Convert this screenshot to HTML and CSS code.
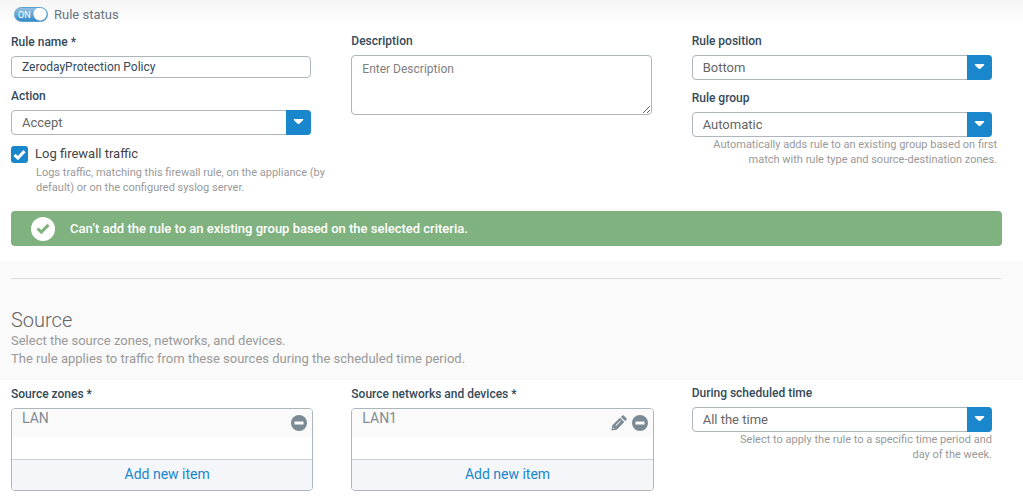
FILE: index.html
```html
<!DOCTYPE html>
<html lang="en">
<head>
<meta charset="utf-8">
<title>Firewall rule</title>
<link rel="stylesheet" href="styles.css">
</head>
<body>
<form class="rule-form">
  <section class="general">
    <label class="status">
      <span class="toggle">
        <input class="toggle-input" type="checkbox" checked>
        <span class="toggle-text">ON</span>
      </span>
      Rule status
    </label>
    <div class="columns">
      <div class="column">
        <label class="label label-low" for="name">Rule name *</label>
        <input class="text-input" id="name" type="text" value="ZerodayProtection Policy">
        <label class="label label-next" for="action">Action</label>
        <div class="select">
          <select class="select-input" id="action"><option>Accept</option></select>
          <svg class="select-arrow" viewBox="0 0 25 25" aria-hidden="true"><path d="M8 10.200c-.5-.6-.2-1.200.5-1.200h8c.7 0 1 .6.500 1.200l-3.600 3.500c-.5.500-1.300.500-1.800 0z"/></svg>
        </div>
        <label class="check">
          <span class="check-wrap">
            <input class="check-input" type="checkbox" checked>
            <svg class="check-mark" viewBox="0 0 17 17" aria-hidden="true"><path d="M3.500 8.800l3.400 3.300 6.600-7"/></svg>
          </span>
          <span class="check-text">Log firewall traffic</span>
        </label>
        <p class="hint hint-check">Logs traffic, matching this firewall rule, on the appliance (by default) or on the configured syslog server.</p>
      </div>
      <div class="column">
        <label class="label" for="description">Description</label>
        <textarea class="text-area" id="description" placeholder="Enter Description"></textarea>
      </div>
      <div class="column">
        <label class="label" for="position">Rule position</label>
        <div class="select">
          <select class="select-input" id="position"><option>Bottom</option></select>
          <svg class="select-arrow" viewBox="0 0 25 25" aria-hidden="true"><path d="M8 10.200c-.5-.6-.2-1.200.5-1.200h8c.7 0 1 .6.500 1.200l-3.600 3.500c-.5.500-1.300.500-1.800 0z"/></svg>
        </div>
        <label class="label label-next" for="group">Rule group</label>
        <div class="select">
          <select class="select-input" id="group"><option>Automatic</option></select>
          <svg class="select-arrow" viewBox="0 0 25 25" aria-hidden="true"><path d="M8 10.200c-.5-.6-.2-1.200.5-1.200h8c.7 0 1 .6.500 1.200l-3.600 3.500c-.5.500-1.300.500-1.800 0z"/></svg>
        </div>
        <p class="hint hint-right hint-wide">Automatically adds rule to an existing group based on first match with rule type and source-destination zones.</p>
      </div>
    </div>
    <div class="alert" role="status">
      <svg class="alert-icon" viewBox="0 0 24 24" aria-hidden="true"><circle cx="12" cy="12" r="12" fill="#fff"/><path d="M6.500 11.500l3.800 3.600 7.200-7.200" fill="none" stroke="#7fb27f" stroke-width="3"/></svg>
      <span>Can’t add the rule to an existing group based on the selected criteria.</span>
    </div>
  </section>

  <section class="section-head">
    <h2 class="title">Source</h2>
    <p class="lead">Select the source zones, networks, and devices.<br>The rule applies to traffic from these sources during the scheduled time period.</p>
  </section>

  <section class="source columns">
    <div class="column">
      <h3 class="label label-low">Source zones *</h3>
      <div class="list">
        <ul class="items">
          <li class="item">
            <span class="item-name">LAN</span>
            <button class="icon-button" type="button" aria-label="Remove LAN"><svg class="icon" viewBox="0 0 16 16"><circle cx="8" cy="8" r="8"/><path d="M3.500 6.600h9v2.800h-9z" fill="#fff"/></svg></button>
          </li>
        </ul>
        <button class="add" type="button">Add new item</button>
      </div>
    </div>
    <div class="column">
      <h3 class="label label-low">Source networks and devices *</h3>
      <div class="list">
        <ul class="items">
          <li class="item">
            <span class="item-name">LAN1</span>
            <button class="icon-button" type="button" aria-label="Edit LAN1"><svg class="icon" viewBox="0 0 16 16"><path fill-rule="evenodd" d="M.5 15.500l.8-5.200L9 2.700l4.300 4.300-7.600 7.700zM2.200 12.500l-.3 1.600 1.600-.3zM4.500 10.300l.6.600 4.800-4.800-.6-.6zM9.900 1.900l1.200-1.200c.6-.6 1.200-.6 1.800 0l2.400 2.400c.6.600.6 1.200 0 1.800L14.100 6.100z"/></svg></button>
            <button class="icon-button" type="button" aria-label="Remove LAN1"><svg class="icon" viewBox="0 0 16 16"><circle cx="8" cy="8" r="8"/><path d="M3.500 6.600h9v2.800h-9z" fill="#fff"/></svg></button>
          </li>
        </ul>
        <button class="add" type="button">Add new item</button>
      </div>
    </div>
    <div class="column">
      <label class="label" for="schedule">During scheduled time</label>
      <div class="select">
        <select class="select-input" id="schedule"><option>All the time</option></select>
        <svg class="select-arrow" viewBox="0 0 25 25" aria-hidden="true"><path d="M8 10.200c-.5-.6-.2-1.200.5-1.200h8c.7 0 1 .6.500 1.200l-3.600 3.500c-.5.500-1.300.500-1.800 0z"/></svg>
      </div>
      <p class="hint hint-right">Select to apply the rule to a specific time period and day of the week.</p>
    </div>
  </section>
</form>
</body>
</html>
```
FILE: styles.css
```css
* { box-sizing: border-box; }

body {
  margin: 0;
  background: #fff;
  color: #666;
  font-family: Roboto, "Liberation Sans", sans-serif;
  font-size: 13px;
}

h2, h3, p, ul { margin: 0; padding: 0; }
button, input, select, textarea { font: inherit; margin: 0; }

.general {
  padding-top: 6px;
  background: linear-gradient(#f5f5f5, #fff 26px);
}

.status {
  display: flex;
  align-items: center;
  gap: 6px;
  height: 17px;
  padding-left: 14px;
  color: #66747f;
}

.toggle { position: relative; width: 34px; height: 15px; }

.toggle-input {
  display: block;
  appearance: none;
  width: 100%;
  height: 100%;
  border: 1px solid #5a9fce;
  border-radius: 8px;
  background:
    radial-gradient(circle at 26px 7px, #fff 6px, transparent 7px),
    linear-gradient(#9cc6e2, #2d87c7);
  background-origin: border-box;
}

.toggle-text {
  position: absolute;
  left: 4px;
  top: 0;
  color: #fff;
  font-size: 9px;
  line-height: 16px;
  pointer-events: none;
}

.columns {
  display: grid;
  grid-template-columns: repeat(3, minmax(0, 1fr));
  gap: 40px;
  padding: 0 31px 0 11px;
}

.general .columns { padding-top: 10px; }
.column { min-width: 0; }

.label {
  display: block;
  height: 22px;
  color: #34495a;
  font-size: 12px;
  font-weight: 500;
  line-height: 16px;
}

.label-low { height: 23px; padding-top: 1px; }
.label-next { margin-top: 10px; }

.text-input, .text-area, .select-input {
  display: block;
  width: 100%;
  border: 1px solid #adb5bd;
  border-radius: 4px;
  background: #fff;
}

.text-input { height: 22px; padding: 0 10px; color: #34495a; font-size: 12px; }
.text-area { height: 60px; padding: 6px 10px; font-size: 12px; resize: both; }
.text-area::placeholder { color: #808080; }

.select { position: relative; }
.select-input { appearance: none; height: 25px; padding: 0 34px 0 10px; color: #666; }

.select-arrow {
  position: absolute;
  right: 0;
  top: 0;
  width: 25px;
  height: 25px;
  border-radius: 0 4px 4px 0;
  background: #1a86cc;
  fill: #fff;
  pointer-events: none;
}

.check {
  display: flex;
  align-items: flex-end;
  gap: 7px;
  height: 18px;
  margin-top: 10px;
  color: #444;
}

.check-text { align-self: flex-start; line-height: 17px; }
.check-wrap { position: relative; width: 17px; height: 17px; }

.check-input {
  display: block;
  appearance: none;
  width: 100%;
  height: 100%;
  border-radius: 3px;
  background: #1a86cc;
}

.check-mark {
  position: absolute;
  inset: 0;
  fill: none;
  stroke: #fff;
  stroke-width: 3;
  pointer-events: none;
}

.hint { color: #999; font-size: 11px; line-height: 15px; }
.hint-check { padding: 2px 0 0 25px; margin-right: -24px; }
.hint-right { padding-left: 32px; text-align: right; }
.hint-wide { margin-right: -5px; padding-left: 10px; }

.alert {
  display: flex;
  align-items: center;
  gap: 15px;
  height: 35px;
  margin: 16px 21px 15px 11px;
  padding-left: 20px;
  border-radius: 4px;
  background: #7fb27f;
  color: #fff;
  font-weight: 500;
}

.alert-icon { width: 24px; height: 24px; }

.section-head {
  padding: 17px 22px 12px 11px;
  background: #fafafa;
}

.title {
  padding-top: 29px;
  border-top: 1px solid #ddd;
  color: #666;
  font-size: 20px;
  font-weight: 300;
  line-height: 24px;
}

.lead { color: #999; line-height: 18px; }

.source { padding-top: 5px; padding-bottom: 12px; }

.list {
  margin-right: -2px;
  overflow: hidden;
  border: 1px solid #adb5bd;
  border-radius: 4px;
}

.items { min-height: 50px; list-style: none; }

.item {
  display: flex;
  align-items: center;
  gap: 5px;
  height: 28px;
  padding: 0 5px 0 10px;
  background: #fafafa;
}

.item-name {
  flex: 1;
  align-self: flex-start;
  color: #808c95;
  font-size: 14px;
  line-height: 19px;
}

.icon-button {
  padding: 0;
  border: 0;
  background: none;
  cursor: pointer;
}

.icon { display: block; width: 16px; height: 16px; fill: #7c8a94; }

.add {
  display: block;
  width: 100%;
  height: 31px;
  padding: 0 0 2px 10px;
  border: 0;
  border-top: 1px solid #ccd1d6;
  background: #f4f6f9;
  color: #1a86cc;
  font-size: 14px;
  cursor: pointer;
}
```
